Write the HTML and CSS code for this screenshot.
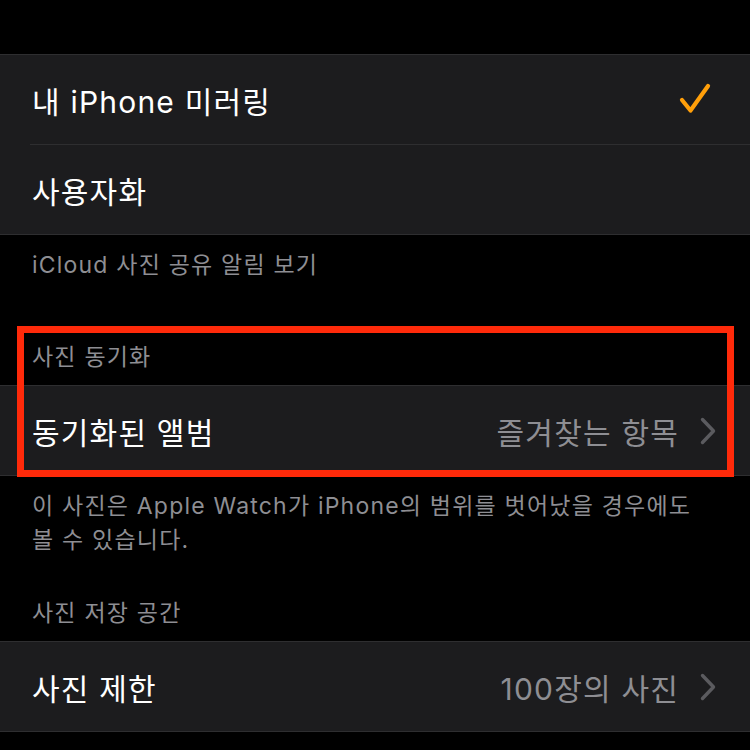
FILE: index.html
```html
<!DOCTYPE html>
<html lang="ko">
<head>
  <meta charset="UTF-8">
  <meta name="viewport" content="width=device-width, initial-scale=1.0">
  <title>사진 설정</title>
  <link rel="stylesheet" href="styles.css">
</head>
<body>
  <div class="screen">
    <div class="group first-group">
      <div class="cell">
        <div class="cell-inner">
          <span class="label">내 iPhone 미러링</span>
          <svg class="check" width="34" height="34" viewBox="0 0 34 34">
            <path d="M4 17 L12.5 27.5 L30 3" fill="none" stroke="#ff9f0a" stroke-width="4.2" stroke-linecap="round" stroke-linejoin="round"/>
          </svg>
        </div>
      </div>
      <div class="cell">
        <div class="cell-inner last">
          <span class="label">사용자화</span>
        </div>
      </div>
    </div>

    <p class="footer">iCloud 사진 공유 알림 보기</p>

    <h2 class="header header-sync">사진 동기화</h2>
    <div class="group">
      <div class="cell">
        <div class="cell-inner last">
          <span class="label">동기화된 앨범</span>
          <span class="value">즐겨찾는 항목</span>
          <svg class="chevron" width="16" height="28" viewBox="0 0 16 28">
            <path d="M2.5 2.5 L13.5 14 L2.5 25.5" fill="none" stroke="#5b5b5f" stroke-width="3.4" stroke-linecap="round" stroke-linejoin="round"/>
          </svg>
        </div>
      </div>
    </div>

    <p class="footer footer-long">이 사진은 Apple Watch가 iPhone의 범위를 벗어났을 경우에도 볼 수 있습니다.</p>

    <h2 class="header header-storage">사진 저장 공간</h2>
    <div class="group">
      <div class="cell">
        <div class="cell-inner last">
          <span class="label">사진 제한</span>
          <span class="value">100장의 사진</span>
          <svg class="chevron" width="16" height="28" viewBox="0 0 16 28">
            <path d="M2.5 2.5 L13.5 14 L2.5 25.5" fill="none" stroke="#5b5b5f" stroke-width="3.4" stroke-linecap="round" stroke-linejoin="round"/>
          </svg>
        </div>
      </div>
    </div>

    <!-- highlight around the sync section -->
    <div class="highlight"></div>
  </div>
</body>
</html>
```

FILE: styles.css
```css
body {
  margin: 0;
  padding: 0;
  background-color: #000;
  font-family: "Inter", "Noto Sans CJK KR", sans-serif;
  color: #fff;
}

.screen {
  position: relative;
  width: 750px;
  height: 750px;
  overflow: hidden;
  background-color: #000;
}

.group {
  background-color: #1c1c1e;
  border-top: 1px solid #2e2e30;
  border-bottom: 1px solid #2e2e30;
}

.first-group {
  margin-top: 54px;
}

.cell {
  padding-left: 30px;
}

.cell-inner {
  display: flex;
  align-items: center;
  height: 89px;
  padding-right: 34px;
  border-bottom: 1px solid #2e2e30;
}

.cell-inner.last {
  height: 89px;
  border-bottom: none;
}

.label {
  flex: 1;
  padding-left: 2px;
  font-size: 30px;
  letter-spacing: 1.2px;
  color: #fff;
}

.value {
  font-size: 30px;
  letter-spacing: 1.2px;
  color: #8e8e93;
  margin-right: 21px;
}

.check {
  margin-right: 4px;
}

.chevron {
  display: block;
}

.footer {
  margin: 0;
  padding: 13px 40px 0 32px;
  font-size: 23px;
  letter-spacing: 1.2px;
  line-height: 34px;
  color: #8e8e93;
  word-break: keep-all;
}

.header {
  margin: 0;
  padding: 0 32px 13px;
  font-size: 23px;
  letter-spacing: 1.2px;
  font-weight: normal;
  line-height: 30px;
  color: #8e8e93;
}

.header-sync {
  margin-top: 60px;
}

.header-storage {
  margin-top: 41px;
}

.highlight {
  position: absolute;
  left: 17px;
  top: 326px;
  width: 703px;
  height: 137px;
  border: 7px solid #ff2a0a;
}
```
